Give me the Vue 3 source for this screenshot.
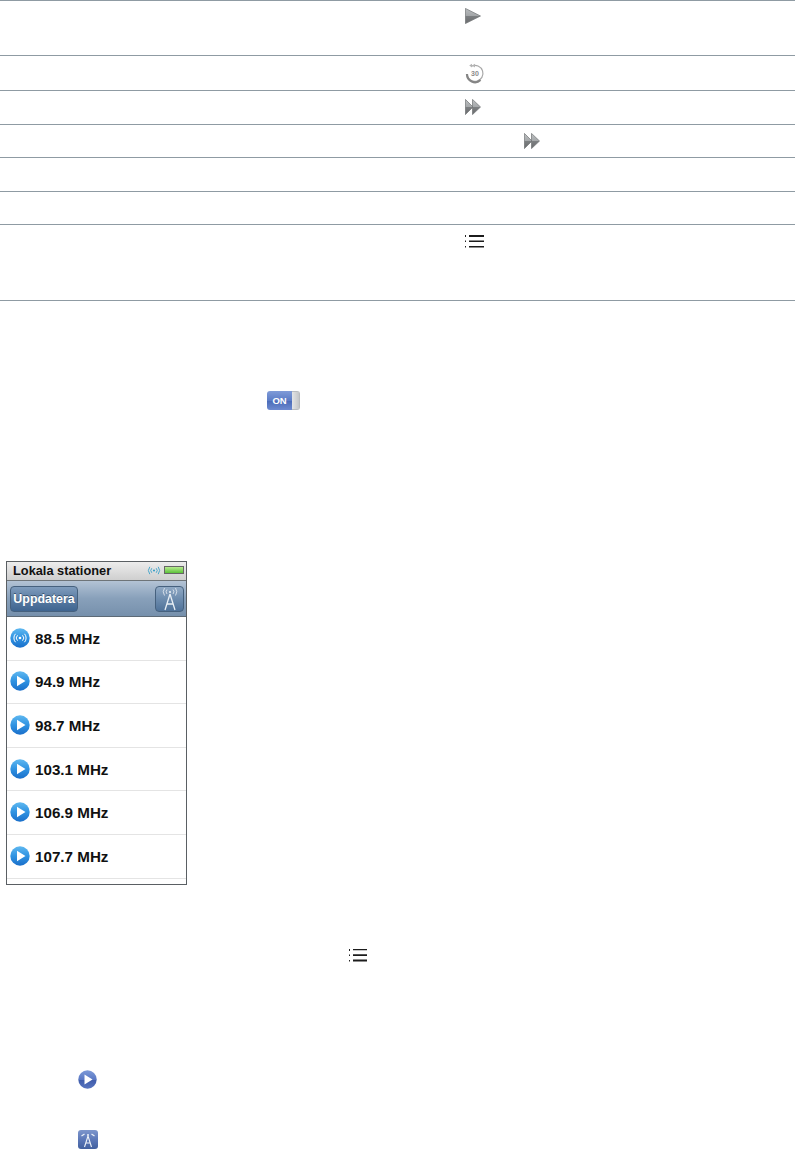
<script setup>
const rows = [
  { h: 55, icon: 'play', top: 7, left: 0 },
  { h: 35, icon: 'replay', top: 7, left: 0 },
  { h: 34, icon: 'ff', top: 8, left: 0 },
  { h: 33, icon: 'ff', top: 8, left: 59 },
  { h: 34 },
  { h: 33 },
  { h: 76, icon: 'list', top: 9, left: 0 },
]
const stations = ['88.5 MHz', '94.9 MHz', '98.7 MHz', '103.1 MHz', '106.9 MHz', '107.7 MHz']
</script>

<template>
  <main class="page">
    <section class="table">
      <div
        v-for="(row, i) in rows"
        :key="i"
        class="row"
        :style="{ height: row.h + 'px', paddingTop: (row.top || 0) + 'px', paddingLeft: 465 + (row.left || 0) + 'px' }"
      >
        <svg v-if="row.icon === 'play'" class="ic" width="16" height="16" viewBox="0 0 16 16">
          <defs>
            <linearGradient id="pl" x1="0" y1="0" x2="0" y2="1">
              <stop offset="0" stop-color="#b9bcbe" />
              <stop offset=".5" stop-color="#a2a5a7" />
              <stop offset=".52" stop-color="#7b7e80" />
              <stop offset="1" stop-color="#6a6c6e" />
            </linearGradient>
          </defs>
          <path d="M.4.400 15.500 8 .4 15.600z" fill="url(#pl)" stroke="#6f7173" stroke-width=".7" />
        </svg>
        <svg v-else-if="row.icon === 'replay'" class="ic" width="20" height="21" viewBox="0 0 20 21">
          <path d="M6.500 3.200A8 8 0 1 1 2 11" fill="none" stroke="#a8a8a8" stroke-width="1.200" />
          <path d="M2 11a8 8 0 0 0 13.500 6" fill="none" stroke="#858585" stroke-width="2.200" />
          <path d="M7 .8 4.200 2.600 7 4.400zM10 .8 7.200 2.600 10 4.400z" fill="#b4b4b4" />
          <text x="10" y="13.400" text-anchor="middle" class="replay-t">30</text>
        </svg>
        <svg v-else-if="row.icon === 'ff'" class="ic" width="16" height="16" viewBox="0 0 16 16">
          <defs>
            <linearGradient :id="'ff' + i" x1="0" y1="0" x2="0" y2="1">
              <stop offset="0" stop-color="#bcbfc1" />
              <stop offset=".5" stop-color="#a5a8aa" />
              <stop offset=".52" stop-color="#7c7f81" />
              <stop offset="1" stop-color="#6a6c6e" />
            </linearGradient>
          </defs>
          <path d="M.4.400 8 8 .4 15.600z" :fill="'url(#ff' + i + ')'" stroke="#6f7173" stroke-width=".7" />
          <path d="M7.500.4 15.500 8 7.500 15.600z" :fill="'url(#ff' + i + ')'" stroke="#6f7173" stroke-width=".7" />
        </svg>
        <svg v-else-if="row.icon === 'list'" class="ic" width="20" height="14" viewBox="0 0 20 14">
          <path d="M0 1h1v2H0zM0 6.500h1v1.600H0zM0 12h1v1.500H0z" fill="#222" />
          <path d="M4 1h15v2H4zM4 6.500h15v1.400H4zM4 12h15v1.400H4z" fill="#1c1c1c" />
        </svg>
      </div>
    </section>

    <div class="switch">
      <span class="switch-on">ON</span>
      <span class="switch-knob"></span>
    </div>

    <section class="phone">
      <header class="status">
        <span class="status-title">Lokala stationer</span>
        <svg width="14" height="9" viewBox="0 0 14 9" class="status-wave">
          <circle cx="7" cy="4.500" r="1.100" fill="#3aa0c8" />
          <path d="M4.800 2.200a3.400 3.400 0 0 0 0 4.600M9.200 2.200a3.400 3.400 0 0 1 0 4.600M2.800.8a6 6 0 0 0 0 7.400M11.200.8a6 6 0 0 1 0 7.400" fill="none" stroke="#3aa0c8" stroke-width=".9" />
        </svg>
        <span class="battery"><span class="battery-fill"></span></span>
      </header>
      <div class="toolbar">
        <button class="refresh">Uppdatera</button>
        <span class="tower-btn">
          <svg width="24" height="24" viewBox="0 0 24 24">
            <g fill="none" stroke="#e8eef4" stroke-width="1">
              <path d="M12 7 7 23M12 7l5 16M9 17h6" stroke-width="1.300" />
              <path d="M9 2.500a3.500 3.500 0 0 0 0 4.500M15 2.500a3.500 3.500 0 0 1 0 4.500M6.500 1a6.500 6.500 0 0 0 0 7.500M17.500 1a6.500 6.500 0 0 1 0 7.500" stroke-width=".8" />
            </g>
            <circle cx="12" cy="5" r="1.100" fill="#e8eef4" />
          </svg>
        </span>
      </div>
      <ul class="stations">
        <li v-for="(s, i) in stations" :key="s" class="station">
          <svg width="20" height="20" viewBox="0 0 20 20" class="station-ic">
            <defs>
              <linearGradient :id="'b' + i" x1="0" y1="0" x2="0" y2="1">
                <stop offset="0" stop-color="#5fb8f0" />
                <stop offset=".5" stop-color="#2f93e2" />
                <stop offset="1" stop-color="#1a6fca" />
              </linearGradient>
            </defs>
            <circle cx="10" cy="10" r="9.700" :fill="'url(#b' + i + ')'" />
            <template v-if="i === 0">
              <circle cx="10" cy="10" r="1.300" fill="#fff" />
              <path d="M7.500 7.300a3.800 3.800 0 0 0 0 5.400M12.500 7.300a3.800 3.800 0 0 1 0 5.400M5.500 5.800a6.300 6.300 0 0 0 0 8.400M14.500 5.800a6.300 6.300 0 0 1 0 8.400" fill="none" stroke="#fff" stroke-width="1" />
            </template>
            <path v-else d="M7 4.700 15.500 10 7 15.300z" fill="#fff" />
          </svg>
          <span class="station-label">{{ s }}</span>
        </li>
      </ul>
    </section>

    <svg class="list-icon" width="20" height="14" viewBox="0 0 20 14">
      <path d="M1 1h1v2H1zM1 6.500h1v1.600H1zM1 12h1v1.500H1z" fill="#222" />
      <path d="M5 1h14v1.300H5zM5 6.200h14v1.900H5zM5 11.500h14v1.900H5z" fill="#1c1c1c" />
    </svg>

    <svg class="round-play" width="19" height="19" viewBox="0 0 19 19">
      <defs>
        <linearGradient id="rp" x1="0" y1="0" x2="0" y2="1">
          <stop offset="0" stop-color="#7d9ad8" />
          <stop offset=".5" stop-color="#5a78c4" />
          <stop offset=".52" stop-color="#3f5cab" />
          <stop offset="1" stop-color="#5875c0" />
        </linearGradient>
      </defs>
      <circle cx="9.500" cy="9.500" r="9.200" fill="url(#rp)" />
      <path d="M6.500 4.500 14.500 9.500 6.500 14.500z" fill="#fff" />
    </svg>

    <span class="tower-small">
      <svg width="20" height="19" viewBox="0 0 20 19">
        <g fill="none" stroke="#eef2f8">
          <path d="M10 6 6.500 17M10 6l3.500 11M8 13h4" stroke-width="1.100" />
          <path d="M6.500 4 3.500 6M13.500 4 16.500 6" stroke-width="1.200" />
        </g>
        <circle cx="10" cy="5" r="1" fill="#eef2f8" />
      </svg>
    </span>
  </main>
</template>

<style scoped>
.page {
  width: 795px;
  height: 1149px;
  overflow: hidden;
  background: #fff;
  font-family: "Liberation Sans", Arial, sans-serif;
}
.table {
  border-top: 1px solid #8f9ba3;
}
.row {
  box-sizing: border-box;
  border-bottom: 1px solid #8f9ba3;
}
.ic {
  display: block;
}
.replay-t {
  font: bold 7px "Liberation Sans", sans-serif;
  fill: #8a8a8a;
}
.switch {
  display: flex;
  width: 33px;
  height: 19px;
  margin: 90px 0 0 267px;
  border-radius: 3px;
  overflow: hidden;
}
.switch-on {
  flex: 1;
  display: flex;
  align-items: center;
  justify-content: center;
  color: #fff;
  font-size: 9.500px;
  font-weight: 700;
  background: linear-gradient(#7f9bd8, #5c7cc6 50%, #4a6bb8 52%, #6d8ad0);
}
.switch-knob {
  width: 8px;
  background: linear-gradient(90deg, #e4e5e6, #c4c6c8);
  border: 1px solid #b9bcbf;
  border-left: 0;
  box-sizing: border-box;
}
.phone {
  box-sizing: border-box;
  width: 181px;
  height: 324px;
  margin: 151px 0 0 6px;
  border: 1px solid #5a5f63;
  display: flex;
  flex-direction: column;
  overflow: hidden;
}
.status {
  height: 19px;
  display: flex;
  align-items: center;
  padding: 0 2px 2px 6px;
  background: linear-gradient(#ececec, #cfcfcf);
  border-bottom: 1px solid #6e7478;
  box-sizing: border-box;
  flex: none;
}
.status-title {
  flex: 1;
  font-size: 12.800px;
  font-weight: 700;
  color: #111;
}
.status-wave {
  margin-right: 3px;
}
.battery {
  width: 20px;
  height: 8px;
  border: 1px solid #666;
  box-sizing: border-box;
  background: #444;
}
.battery-fill {
  display: block;
  height: 100%;
  background: linear-gradient(#b7ec90, #5cc13a);
}
.toolbar {
  height: 36px;
  flex: none;
  box-sizing: border-box;
  display: flex;
  align-items: center;
  justify-content: space-between;
  padding: 0 2px 0 3px;
  background: linear-gradient(#b3c3d5, #88a0ba 50%, #7690ac);
  border-bottom: 1px solid #5d6a76;
}
.refresh {
  width: 68px;
  height: 26px;
  padding: 0;
  border: 1px solid #46617e;
  border-radius: 4px;
  background: linear-gradient(#7f9cbd, #5b7da3 50%, #3f6590);
  color: #fff;
  font: 700 12.400px "Liberation Sans", sans-serif;
  text-shadow: 0 -1px 0 #3a5470;
}
.tower-btn {
  box-sizing: border-box;
  width: 29px;
  height: 26px;
  border: 1px solid #46617e;
  border-radius: 4px;
  background: linear-gradient(#90a9c4, #6d8cae 50%, #4f7299);
  display: flex;
  align-items: center;
  justify-content: center;
}
.stations {
  list-style: none;
  margin: 0;
  padding: 0;
}
.station {
  box-sizing: border-box;
  height: 43.600px;
  display: flex;
  align-items: center;
  padding-left: 3px;
  gap: 5px;
  border-bottom: 1px solid #e4e4e4;
}
.station-ic {
  flex: none;
  margin-top: -1px;
}
.station-label {
  font-size: 15.200px;
  font-weight: 700;
  color: #111;
}
.list-icon {
  display: block;
  margin: 63px 0 0 348px;
}
.round-play {
  display: block;
  margin: 108px 0 0 78px;
}
.tower-small {
  display: flex;
  width: 20px;
  height: 19px;
  margin: 41px 0 0 78px;
  border-radius: 3px;
  background: linear-gradient(#7d96cc, #5c78b8 50%, #42609f);
}
</style>
